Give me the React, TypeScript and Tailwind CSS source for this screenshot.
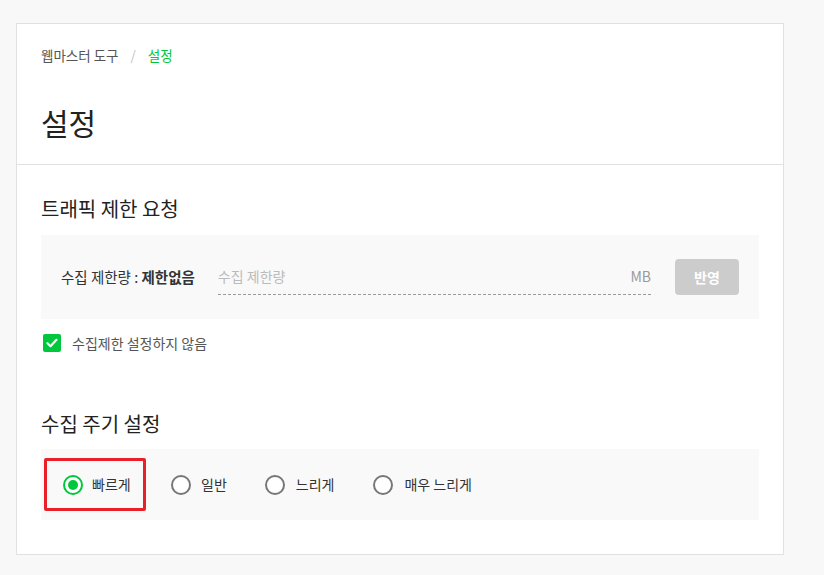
import React from "react";

const font = { fontFamily: '"Noto Sans CJK KR", "Noto Sans", sans-serif' };

const Radio = ({ checked }: { checked?: boolean }) => (
  <span
    className={`w-[20px] h-[20px] rounded-full border-2 flex items-center justify-center bg-white ${
      checked ? "border-[#00c73c]" : "border-[#777777]"
    }`}
  >
    {checked && <span className="w-[10px] h-[10px] rounded-full bg-[#00c73c]" />}
  </span>
);

const App = () => {
  return (
    <div className="w-[824px] h-[575px] bg-[#f8f8f8] pt-[23px] pl-[16px]" style={font}>
      <div className="w-[768px] h-[532px] bg-white border border-[#e1e1e1]">
        <div className="px-[24px] pt-[21px] pb-[22px] border-b border-[#e1e1e1]">
          <div className="flex items-center h-[20px] text-[13.5px] text-[#555555]">
            <span>웹마스터 도구</span>
            <span className="mx-[12px] text-[#c5c5c5]">/</span>
            <span className="text-[#00c73c]">설정</span>
          </div>
          <h1 className="mt-[37px] h-[40px] leading-[40px] text-[30px] text-[#222222]">설정</h1>
        </div>

        <div className="px-[24px] pt-[30px]">
          <h2 className="h-[28px] leading-[28px] text-[20px] text-[#222222]">트래픽 제한 요청</h2>
          <div className="mt-[12px] h-[84px] bg-[#f9f9f9] px-[20px] flex items-center">
            <div className="text-[14.5px] text-[#333333] whitespace-nowrap">
              수집 제한량 : <b className="font-bold">제한없음</b>
            </div>
            <div className="ml-[23px] flex-1 h-[36px] flex items-center border-b border-dashed border-[#9a9a9a]">
              <span className="flex-1 text-[14px] text-[#bbbbbb]">수집 제한량</span>
              <span className="text-[14px] text-[#999999]">MB</span>
            </div>
            <button className="ml-[24px] w-[64px] h-[36px] rounded-[4px] bg-[#cccccc] text-white text-[14px] font-bold">
              반영
            </button>
          </div>

          <label className="mt-[15px] ml-[2px] flex items-center h-[18px]">
            <span className="w-[18px] h-[18px] rounded-[2px] bg-[#00c73c] flex items-center justify-center">
              <svg width="12" height="10" viewBox="0 0 12 10" fill="none">
                <path d="M1.5 5.2L4.5 8.2L10.5 1.8" stroke="white" strokeWidth="2.2" strokeLinecap="round" strokeLinejoin="round" />
              </svg>
            </span>
            <span className="ml-[11px] text-[14px] text-[#555555]">수집제한 설정하지 않음</span>
          </label>

          <h2 className="mt-[58px] h-[28px] leading-[28px] text-[20px] text-[#222222]">수집 주기 설정</h2>
          <div className="mt-[11px] h-[71px] bg-[#f9f9f9] pl-[3px] flex items-center text-[14px] text-[#333333]">
            <div className="h-[53px] w-[102px] border-[3px] border-[#e8202a] rounded-[2px] pl-[16px] flex items-center">
              <Radio checked />
              <span className="ml-[9px]">빠르게</span>
            </div>
            <div className="ml-[25px] flex items-center">
              <Radio />
              <span className="ml-[10px]">일반</span>
            </div>
            <div className="ml-[38px] flex items-center">
              <Radio />
              <span className="ml-[11px]">느리게</span>
            </div>
            <div className="ml-[39px] flex items-center">
              <Radio />
              <span className="ml-[11px]">매우 느리게</span>
            </div>
          </div>
        </div>
      </div>
    </div>
  );
};

export default App;
